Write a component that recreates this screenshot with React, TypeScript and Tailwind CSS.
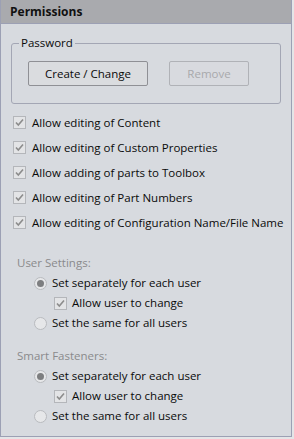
import React from "react";

const font = { fontFamily: '"Segoe UI", "Open Sans", "Noto Sans", sans-serif' };

function Check({ checked = true }: { checked?: boolean }) {
  return (
    <span className="w-[13px] h-[13px] border border-[#b4b6ba] bg-[#e3e4e6] flex items-center justify-center shrink-0">
      {checked && (
        <svg width="11" height="11" viewBox="0 0 11 11">
          <path d="M2 5.5 L4.3 8 L9 2.5" fill="none" stroke="#8c8c8c" strokeWidth="1.6" />
        </svg>
      )}
    </span>
  );
}

function Radio({ on }: { on: boolean }) {
  return (
    <span className="w-[13px] h-[13px] rounded-full border border-[#b9bbbf] bg-[#e6e7e9] flex items-center justify-center shrink-0">
      {on && <span className="w-[7px] h-[7px] rounded-full bg-[#7d7e80]" />}
    </span>
  );
}

function CheckRow({ label }: { label: string }) {
  return (
    <div className="h-[25px] flex items-center gap-[6px] pl-[12px]">
      <Check />
      <span className="text-[11.5px] text-[#0a0a0a] whitespace-nowrap">{label}</span>
    </div>
  );
}

function Section({ title }: { title: string }) {
  return (
    <div>
      <div className="h-[20px] flex items-center pl-[16px] text-[11.5px] text-[#8a8a8c]">{title}</div>
      <div className="h-[20px] flex items-center gap-[5px] pl-[33px]">
        <Radio on />
        <span className="text-[11.5px] text-[#0a0a0a]">Set separately for each user</span>
      </div>
      <div className="h-[20px] flex items-center gap-[5px] pl-[53px]">
        <Check />
        <span className="text-[11.5px] text-[#0a0a0a]">Allow user to change</span>
      </div>
      <div className="h-[20px] flex items-center gap-[5px] pl-[33px]">
        <Radio on={false} />
        <span className="text-[11.5px] text-[#0a0a0a]">Set the same for all users</span>
      </div>
    </div>
  );
}

export default function App() {
  return (
    <div className="w-[294px] h-[439px] bg-[#e4e5e7]" style={font}>
      <div className="w-[292px] h-[437px] border border-t-0 border-[#9ca0b4] bg-[#d7dadf] flex flex-col">
        <div className="h-[24px] bg-[#a9aaae] border-b border-[#9ca0b4] flex items-center pl-[9px] pt-[1px]">
          <span className="text-[12px] font-bold text-[#111]">Permissions</span>
        </div>
        <div className="px-[10px] pt-[19px]">
          <div className="relative border border-[#a3a6b4] rounded-[3px] h-[61px]">
            <span className="absolute -top-[9px] left-[7px] px-[2px] bg-[#d7dadf] text-[11.5px] leading-[16px] text-[#0a0a0a]">
              Password
            </span>
            <div className="flex gap-[21px] pl-[16px] pt-[17px]">
              <div className="w-[120px] h-[25px] border border-[#8f9095] rounded-[2px] bg-[#dadcdf] flex items-center justify-center text-[11.5px] text-[#0a0a0a]">
                Create / Change
              </div>
              <div className="w-[80px] h-[25px] border border-[#b0b2b7] rounded-[2px] bg-[#d8dadf] flex items-center justify-center text-[11.5px] text-[#a8a9ac]">
                Remove
              </div>
            </div>
          </div>
        </div>
        <div className="pt-[6px]">
          <CheckRow label="Allow editing of Content" />
          <CheckRow label="Allow editing of Custom Properties" />
          <CheckRow label="Allow adding of parts to Toolbox" />
          <CheckRow label="Allow editing of Part Numbers" />
          <CheckRow label="Allow editing of Configuration Name/File Name" />
        </div>
        <div className="pt-[18px]">
          <Section title="User Settings:" />
        </div>
        <div className="pt-[13px]">
          <Section title="Smart Fasteners:" />
        </div>
      </div>
    </div>
  );
}
